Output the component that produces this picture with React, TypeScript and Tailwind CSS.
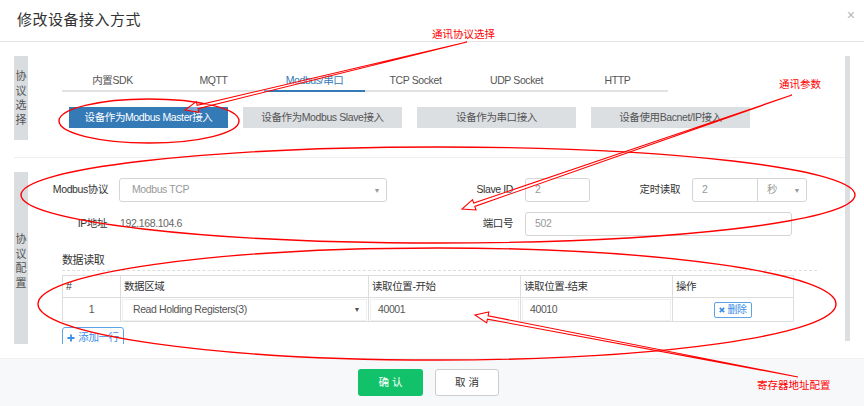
import React from "react";

type Pt = { x: number; y: number };

// Hollow callout arrow: a thin wedge shaft that opens into an outlined head at the tip.
function CalloutArrow({ from, to }: { from: Pt; to: Pt }) {
  const dx = to.x - from.x;
  const dy = to.y - from.y;
  const len = Math.hypot(dx, dy);
  const ux = dx / len;
  const uy = dy / len;
  const nx = -uy;
  const ny = ux;
  const L = 13;
  const W = 5.5;
  const g = 1.7;
  const bx = to.x - ux * L;
  const by = to.y - uy * L;
  const pts: [number, number][] = [
    [from.x, from.y],
    [bx + nx * g, by + ny * g],
    [bx + nx * W, by + ny * W],
    [to.x, to.y],
    [bx - nx * W, by - ny * W],
    [bx - nx * g, by - ny * g],
  ];
  return (
    <polygon
      points={pts.map((p) => `${p[0].toFixed(1)},${p[1].toFixed(1)}`).join(" ")}
      fill="#ffffff"
      fillOpacity={0.35}
      stroke="#ff0000"
      strokeWidth={1.1}
      strokeLinejoin="miter"
    />
  );
}

function SideLabel({ chars, className }: { chars: string[]; className: string }) {
  return (
    <div className={`w-[14px] shrink-0 bg-[#d9dde0] flex flex-col items-center text-[11px] leading-[14.5px] tracking-normal text-[#555] ${className}`}>
      {chars.map((c) => (
        <span key={c}>{c}</span>
      ))}
    </div>
  );
}

function Caret({ className = "" }: { className?: string }) {
  return <span className={`text-[7px] leading-none ${className}`}>▼</span>;
}

const tabs = ["内置SDK", "MQTT", "Modbus/串口", "TCP Socket", "UDP Socket", "HTTP"];
const modes = ["设备作为Modbus Master接入", "设备作为Modbus Slave接入", "设备作为串口接入", "设备使用Bacnet/IP接入"];

export default function App() {
  return (
    <div className="relative w-[864px] h-[406px] overflow-hidden bg-white text-[10.5px] tracking-[-0.4px] text-[#333] font-['Liberation_Sans','Noto_Sans_CJK_SC',sans-serif]">
      {/* dialog header */}
      <header className="h-[42px] flex items-center justify-between pl-[17px] pr-[9px] border-b border-[#e5e5e5]">
        <h1 className="text-[15px] tracking-[0.5px] text-[#333]">修改设备接入方式</h1>
        <span className="relative -top-[5px] text-[14px] tracking-normal text-[#b5b5b5]">×</span>
      </header>

      {/* dialog body */}
      <div className="h-[316px] pt-[14px] px-[14px]">
        <div className="h-[288px] flex overflow-hidden">
          <div className="flex-1">
            {/* protocol selection */}
            <div className="pb-[17px] border-b border-[#eeeeee]">
              <div className="flex h-[84px]">
                <SideLabel chars={["协", "议", "选", "择"]} className="justify-center" />
                <div className="pl-[34px] pt-[14px]">
                  <div className="flex w-[606px] border-b-2 border-[#e2e2e2]">
                    {tabs.map((t) => {
                      const active = t === "Modbus/串口";
                      return (
                        <div
                          key={t}
                          className={`w-[101px] h-[20px] leading-[20px] text-center -mb-[2px] ${
                            active ? "text-[#337ab7] border-b-2 border-[#337ab7] h-[22px]" : "text-[#555]"
                          }`}
                        >
                          {t}
                        </div>
                      );
                    })}
                  </div>
                  <div className="mt-[15px] pl-[7px] flex gap-[15px]">
                    {modes.map((m, i) => (
                      <div
                        key={m}
                        className={`w-[159px] h-[21px] leading-[21px] text-center ${
                          i === 0 ? "bg-[#337ab7] text-white" : "bg-[#dcdfe2] text-[#555]"
                        }`}
                      >
                        {m}
                      </div>
                    ))}
                  </div>
                </div>
              </div>
            </div>

            {/* protocol configuration */}
            <div className="mt-[14px] flex">
              <SideLabel chars={["协", "议", "配", "置"]} className="pt-[60px] h-[176px]" />
              <div className="flex-1">
                <div className="mt-[6px] flex items-center h-[24px]">
                  <div className="w-[80px] text-right">Modbus协议</div>
                  <div className="ml-[11px] w-[268px] h-[24px] border border-[#d5d5d5] rounded-[3px] flex items-center justify-between pl-[12px] pr-[6px] text-[#999]">
                    <span>Modbus TCP</span>
                    <Caret className="text-[#999]" />
                  </div>
                  <div className="w-[126px] text-right">Slave ID</div>
                  <div className="ml-[12px] w-[65px] h-[24px] border border-[#d5d5d5] rounded-[3px] flex items-center pl-[9px] text-[#999]">2</div>
                  <div className="w-[90px] text-right">定时读取</div>
                  <div className="ml-[12px] w-[115px] h-[24px] border border-[#d5d5d5] rounded-[3px] flex">
                    <div className="w-[65px] border-r border-[#d5d5d5] flex items-center pl-[9px] text-[#999]">2</div>
                    <div className="flex-1 flex items-center justify-between pl-[9px] pr-[6px] text-[#999]">
                      <span>秒</span>
                      <Caret className="text-[#999]" />
                    </div>
                  </div>
                </div>

                <div className="mt-[10px] flex items-center h-[24px]">
                  <div className="w-[79px] text-right">IP地址</div>
                  <div className="ml-[13px] w-[267px] text-[#666]">192.168.104.6</div>
                  <div className="w-[126px] text-right">端口号</div>
                  <div className="ml-[12px] w-[267px] h-[24px] border border-[#d5d5d5] rounded-[3px] flex items-center pl-[9px] text-[#999]">502</div>
                </div>

                <div className="ml-[34px] mt-[16px] w-[755px] h-[19px] border-b border-dashed border-[#dddddd] text-[11px] leading-[16px] text-[#333]">
                  数据读取
                </div>

                <table className="ml-[34px] mt-[4px] w-[731px] table-fixed border-collapse">
                  <colgroup>
                    <col className="w-[58px]" />
                    <col className="w-[248px]" />
                    <col className="w-[152px]" />
                    <col className="w-[152px]" />
                    <col className="w-[121px]" />
                  </colgroup>
                  <thead>
                    <tr className="h-[22px] text-left text-[#333]">
                      <th className="border border-[#dddddd] font-normal pl-[3px]">#</th>
                      <th className="border border-[#dddddd] font-normal pl-[3px]">数据区域</th>
                      <th className="border border-[#dddddd] font-normal pl-[3px]">读取位置-开始</th>
                      <th className="border border-[#dddddd] font-normal pl-[3px]">读取位置-结束</th>
                      <th className="border border-[#dddddd] font-normal pl-[3px]">操作</th>
                    </tr>
                  </thead>
                  <tbody>
                    <tr className="h-[24px] text-[#555]">
                      <td className="border border-[#dddddd] text-center">1</td>
                      <td className="border border-[#dddddd] p-0">
                        <div className="h-[22px] mx-px border border-[#f0f0f0] flex items-center justify-between pl-[10px] pr-[6px]">
                          <span>Read Holding Registers(3)</span>
                          <Caret className="text-[#555]" />
                        </div>
                      </td>
                      <td className="border border-[#dddddd] p-0">
                        <div className="h-[22px] mx-px border border-[#f0f0f0] flex items-center pl-[7px]">40001</div>
                      </td>
                      <td className="border border-[#dddddd] p-0">
                        <div className="h-[22px] mx-px border border-[#f0f0f0] flex items-center pl-[7px]">40010</div>
                      </td>
                      <td className="border border-[#dddddd] text-center">
                        <span className="inline-flex items-center gap-[2px] h-[16px] px-[4px] border border-[#5ba4e5] rounded-[2px] text-[10px] text-[#3a8ee6] align-middle">
                          <svg width="6" height="6" viewBox="0 0 6 6">
                            <path d="M0.8 0.8L5.2 5.2M5.2 0.8L0.8 5.2" stroke="#3a8ee6" strokeWidth="1.7" />
                          </svg>
                          删除
                        </span>
                      </td>
                    </tr>
                  </tbody>
                </table>

                <div className="ml-[34px] mt-[5px] w-[62px] h-[22px] border border-[#5ba4e5] rounded-[3px] flex items-center justify-center gap-[3px] text-[#3a8ee6]">
                  <svg width="8" height="8" viewBox="0 0 8 8">
                    <path d="M4 0.5V7.5M0.5 4H7.5" stroke="#3a8ee6" strokeWidth="1.8" />
                  </svg>
                  添加一行
                </div>
              </div>
            </div>
          </div>
          <div className="w-[5px] h-[285px] bg-[#dcdfe2]" />
        </div>
      </div>

      {/* dialog footer */}
      <footer className="h-[48px] bg-[#f7f8fa] border-t border-[#eef0f2] flex items-center justify-center gap-[12px] pr-[7px] tracking-normal">
        <div className="w-[65px] h-[27px] rounded-[3px] bg-[#12c26a] text-white flex items-center justify-center">确 认</div>
        <div className="w-[64px] h-[27px] rounded-[3px] bg-white border border-[#cccccc] text-[#333] flex items-center justify-center">取 消</div>
      </footer>

      {/* red markup layer */}
      <svg className="absolute inset-0 pointer-events-none" width="864" height="406" viewBox="0 0 864 406">
        <ellipse cx="149" cy="121" rx="90" ry="22" fill="none" stroke="#ff0000" strokeWidth="1.4" />
        <ellipse cx="438" cy="195" rx="417" ry="48" fill="none" stroke="#ff0000" strokeWidth="1.4" />
        <ellipse cx="437" cy="304" rx="399" ry="56" fill="none" stroke="#ff0000" strokeWidth="1.4" />
        <CalloutArrow from={{ x: 467, y: 42 }} to={{ x: 185, y: 110 }} />
        <CalloutArrow from={{ x: 792, y: 95 }} to={{ x: 462, y: 209 }} />
        <CalloutArrow from={{ x: 798, y: 377 }} to={{ x: 475, y: 315 }} />
      </svg>
      <span className="absolute left-[432px] top-[29px] text-[10.5px] leading-none tracking-normal text-[#ff0000]">通讯协议选择</span>
      <span className="absolute left-[779px] top-[79px] text-[10.5px] leading-none tracking-normal text-[#ff0000]">通讯参数</span>
      <span className="absolute left-[757px] top-[380px] text-[10.5px] leading-none tracking-normal text-[#ff0000]">寄存器地址配置</span>
    </div>
  );
}
